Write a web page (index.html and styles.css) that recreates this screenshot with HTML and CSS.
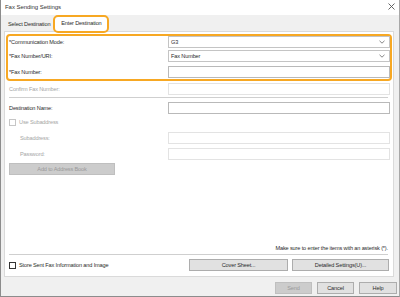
FILE: index.html
```html
<!DOCTYPE html>
<html>
<head>
<meta charset="utf-8">
<link rel="stylesheet" href="styles.css">
</head>
<body>
<div class="win">
  <div class="titlebar">
    <span class="title">Fax Sending Settings</span>
    <svg class="close" width="7" height="7" viewBox="0 0 7 7"><path d="M0.5 0.5L6.5 6.5M6.5 0.5L0.5 6.5" stroke="#555" stroke-width="0.9"/></svg>
  </div>
  <div class="tabs">
    <div class="tab">Select Destination</div>
    <div class="tab tab-active">Enter Destination</div>
  </div>
  <div class="panel">
    <div class="highlight">
      <div class="row">
        <span class="label">*Communication Mode:</span>
        <div class="ctrl select"><span>G3</span><svg width="6" height="4" viewBox="0 0 6 4"><path d="M0.5 0.8L3 3.2L5.5 0.8" fill="none" stroke="#666" stroke-width="0.8"/></svg></div>
      </div>
      <div class="row r2">
        <span class="label">*Fax Number/URI:</span>
        <div class="ctrl select"><span>Fax Number</span><svg width="6" height="4" viewBox="0 0 6 4"><path d="M0.5 0.8L3 3.2L5.5 0.8" fill="none" stroke="#666" stroke-width="0.8"/></svg></div>
      </div>
      <div class="row r3">
        <span class="label">*Fax Number:</span>
        <div class="ctrl"></div>
      </div>
    </div>
    <div class="row out r4 dis">
      <span class="label">Confirm Fax Number:</span>
      <div class="ctrl"></div>
    </div>
    <div class="sep s1"></div>
    <div class="row out r5">
      <span class="label">Destination Name:</span>
      <div class="ctrl"></div>
    </div>
    <div class="check out dis c1"><span class="box"></span><span>Use Subaddress</span></div>
    <div class="row out sub r6 dis">
      <span class="label">Subaddress:</span>
      <div class="ctrl"></div>
    </div>
    <div class="row out sub r7 dis">
      <span class="label">Password:</span>
      <div class="ctrl"></div>
    </div>
    <div class="out r8"><div class="btn btn-dis addbook">Add to Address Book</div></div>
    <div class="grow"></div>
    <div class="note">Make sure to enter the items with an asterisk (*).</div>
    <div class="sep s2"></div>
    <div class="bottom">
      <div class="check"><span class="box dark"></span><span>Store Sent Fax Information and Image</span></div>
      <div class="btn cover">Cover Sheet...</div>
      <div class="btn detail">Detailed Settings(U)...</div>
    </div>
  </div>
  <div class="footer">
    <div class="btn btn-dis fbtn">Send</div>
    <div class="btn fbtn">Cancel</div>
    <div class="btn fbtn help">Help</div>
  </div>
</div>
</body>
</html>
```
FILE: styles.css
```css
* { box-sizing: border-box; }
html, body { margin: 0; padding: 0; }
body {
  width: 400px;
  height: 297px;
  font-family: "Liberation Sans", Arial, sans-serif;
  font-size: 5.6px;
  letter-spacing: -0.15px;
  color: #2b2b2b;
  background: #f0f0f0;
  overflow: hidden;
}
.win {
  width: 400px;
  height: 297px;
  display: flex;
  flex-direction: column;
  border-left: 1px solid #8c8c8c;
  border-right: 1px solid #a8a8a8;
  border-bottom: 1px solid #8c8c8c;
}
.titlebar {
  height: 15px;
  flex: none;
  background: #fff;
  display: flex;
  align-items: center;
  justify-content: space-between;
  padding: 0 4px 1px 4px;
}
.title { font-size: 6px; letter-spacing: -0.05px; color: #333; }
.close { margin-top: -1px; }
.tabs {
  height: 16px;
  flex: none;
  display: flex;
  align-items: flex-end;
  padding-left: 7px;
}
.tab {
  height: 13px;
  display: flex;
  align-items: center;
  padding-bottom: 1px;
}
.tab-active {
  position: relative;
  z-index: 2;
  height: 18px;
  width: 56px;
  margin-left: 3px;
  margin-bottom: -2px;
  border: 2px solid #f7a823;
  border-radius: 5px;
  background: #fff;
  justify-content: center;
  padding-bottom: 2px;
}
.panel {
  flex: none;
  height: 246px;
  margin: 0 5px 0 3px;
  background: #fff;
  border: 1px solid #dadada;
  padding: 2px 1px 0 1px;
  display: flex;
  flex-direction: column;
}
.highlight {
  border: 2px solid #f7a823;
  border-radius: 4px;
  padding: 0 0 1px 1px;
  height: 47px;
}
.row {
  display: flex;
  align-items: center;
  height: 12px;
  flex: none;
}
.label { flex: 1; white-space: nowrap; }
.ctrl {
  width: 222px;
  height: 12px;
  border: 1px solid #b9b9b9;
  background: #fff;
  display: flex;
  align-items: center;
  justify-content: space-between;
  padding: 0 4px 0 2px;
}
.select { border-color: #c4c4c4; }
.r2 { margin-top: 2px; }
.r3 { margin-top: 4px; }
.out { padding-left: 3px; padding-right: 2px; }
.r4 { margin-top: 2px; }
.dis { color: #a6a6a6; }
.dis .ctrl { border-color: #e3e3e3; }
.sep { height: 1px; background: #cfcfcf; margin: 0 4px 0 3px; flex: none; }
.s1 { margin-top: 2px; }
.r5 { margin-top: 4px; }
.check {
  display: flex;
  align-items: center;
  gap: 3px;
  height: 8px;
  flex: none;
}
.c1 { margin-top: 4px; }
.box {
  width: 7px;
  height: 7px;
  border: 1px solid #c6c6c6;
  background: #fff;
  flex: none;
}
.box.dark { border-color: #333; }
.sub { padding-left: 14px; }
.r6 { margin-top: 6px; }
.r7 { margin-top: 4px; }
.r8 { margin-top: 3px; flex: none; }
.btn {
  height: 12px;
  display: flex;
  align-items: center;
  justify-content: center;
  background: #e1e1e1;
  border: 1px solid #adadad;
  white-space: nowrap;
}
.btn-dis {
  background: #cccccc;
  border-color: #bfbfbf;
  color: #9a9a9a;
}
.addbook { width: 106px; }
.grow { flex: 1; }
.note {
  text-align: right;
  padding-right: 4px;
  height: 8px;
  line-height: 8px;
  flex: none;
}
.s2 { margin-top: 2px; }
.bottom {
  display: flex;
  align-items: center;
  height: 12px;
  margin: 4px 0 5px 0;
  padding-left: 3px;
  flex: none;
}
.bottom .check { flex: 1; }
.cover { width: 99px; }
.detail { width: 97px; margin-left: 4px; margin-right: 3px; }
.footer {
  flex: 1;
  display: flex;
  justify-content: flex-end;
  align-items: flex-start;
  padding-top: 5px;
  padding-right: 2px;
  gap: 5px;
}
.fbtn { width: 37px; height: 12px; }
.help { width: 38px; }
```
